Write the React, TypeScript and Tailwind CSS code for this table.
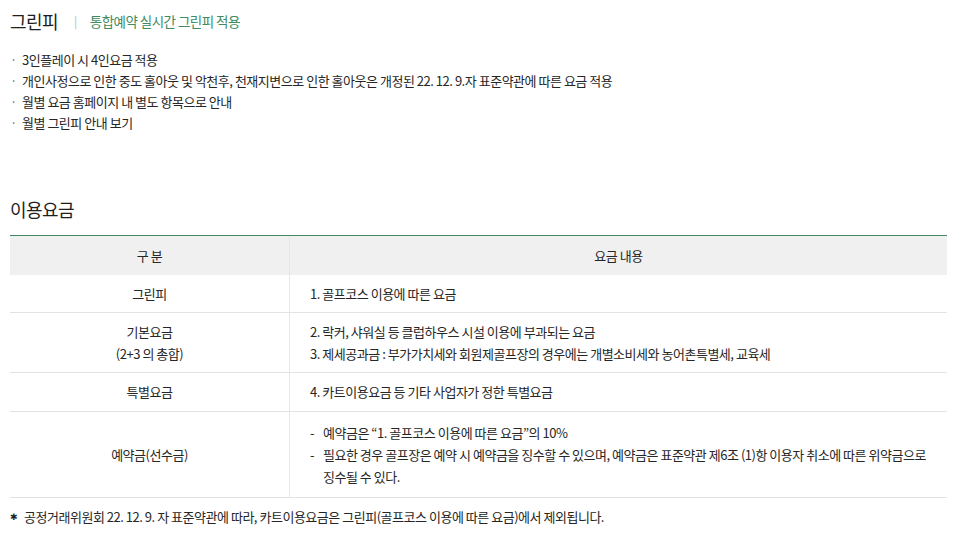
const FONT = "font-['Noto_Sans_CJK_KR','Noto_Sans',sans-serif]";

const notes = [
  "3인플레이 시 4인요금 적용",
  "개인사정으로 인한 중도 홀아웃 및 악천후, 천재지변으로 인한 홀아웃은 개정된 22. 12. 9.자 표준약관에 따른 요금 적용",
  "월별 요금 홈페이지 내 별도 항목으로 안내",
  "월별 그린피 안내 보기",
];

type FeeRow = {
  label: string[];
  lines: string[];
  dash?: boolean;
  height: string;
};

const rows: FeeRow[] = [
  { label: ["그린피"], lines: ["1. 골프코스 이용에 따른 요금"], height: "h-[38px]" },
  {
    label: ["기본요금", "(2+3 의 총합)"],
    lines: [
      "2. 락커, 샤워실 등 클럽하우스 시설 이용에 부과되는 요금",
      "3. 제세공과금 : 부가가치세와 회원제골프장의 경우에는 개별소비세와 농어촌특별세, 교육세",
    ],
    height: "h-[60px]",
  },
  { label: ["특별요금"], lines: ["4. 카트이용요금 등 기타 사업자가 정한 특별요금"], height: "h-[39px]" },
  {
    label: ["예약금(선수금)"],
    lines: [
      "예약금은 “1. 골프코스 이용에 따른 요금”의 10%",
      "필요한 경우 골프장은 예약 시 예약금을 징수할 수 있으며, 예약금은 표준약관 제6조 (1)항 이용자 취소에 따른 위약금으로 징수될 수 있다.",
    ],
    dash: true,
    height: "h-[86px]",
  },
];

export default function App() {
  return (
    <div className={`${FONT} min-h-[536px] w-[966px] bg-white px-[10px] text-[#262626] tracking-[-0.03em]`}>
      <div className="flex items-center pt-[9px]">
        <h2 className="text-[18px] font-normal leading-[24px] tracking-[-0.03em] text-[#1e1e1e]">그린피</h2>
        <span className="ml-[16px] text-[12px] text-[#a9c2b3]">|</span>
        <span className="ml-[13px] text-[13.5px] tracking-[-0.04em] text-[#3f8a60]">통합예약 실시간 그린피 적용</span>
      </div>

      <ul className="mt-[16px] text-[13px] leading-[21px]">
        {notes.map((n) => (
          <li key={n} className="flex">
            <span className="w-[12px] text-[#777]">·</span>
            <span>{n}</span>
          </li>
        ))}
      </ul>

      <h2 className="mt-[64px] text-[18px] font-normal leading-[24px] tracking-[-0.03em] text-[#1e1e1e]">이용요금</h2>

      <div className="mt-[14px] w-[937px] border-t border-[#3f8a64] text-[13px]">
        <div className="flex h-[39px] bg-[#f0f0f0]">
          <div className="flex w-[280px] items-center justify-center border-r border-[#e6e6e6]">구 분</div>
          <div className="flex flex-1 items-center justify-center">요금 내용</div>
        </div>
        {rows.map((r) => (
          <div key={r.label[0]} className={`${r.height} flex border-b border-[#e3e3e3]`}>
            <div className="flex w-[280px] flex-col items-center justify-center border-r border-[#e6e6e6] leading-[22px]">
              {r.label.map((l) => (
                <div key={l}>{l}</div>
              ))}
            </div>
            <div className="flex flex-1 flex-col justify-center px-[20px] leading-[22px]">
              {r.lines.map((l) =>
                r.dash ? (
                  <div key={l} className="flex">
                    <span className="w-[13px] shrink-0">-</span>
                    <span>{l}</span>
                  </div>
                ) : (
                  <div key={l}>{l}</div>
                ),
              )}
            </div>
          </div>
        ))}
      </div>

      <p className="mt-[9px] flex items-center text-[13px] leading-[20px]">
        <span className="w-[14px] font-['DejaVu_Sans',sans-serif] text-[9px]">✱</span>
        <span>공정거래위원회 22. 12. 9. 자 표준약관에 따라, 카트이용요금은 그린피(골프코스 이용에 따른 요금)에서 제외됩니다.</span>
      </p>
    </div>
  );
}
